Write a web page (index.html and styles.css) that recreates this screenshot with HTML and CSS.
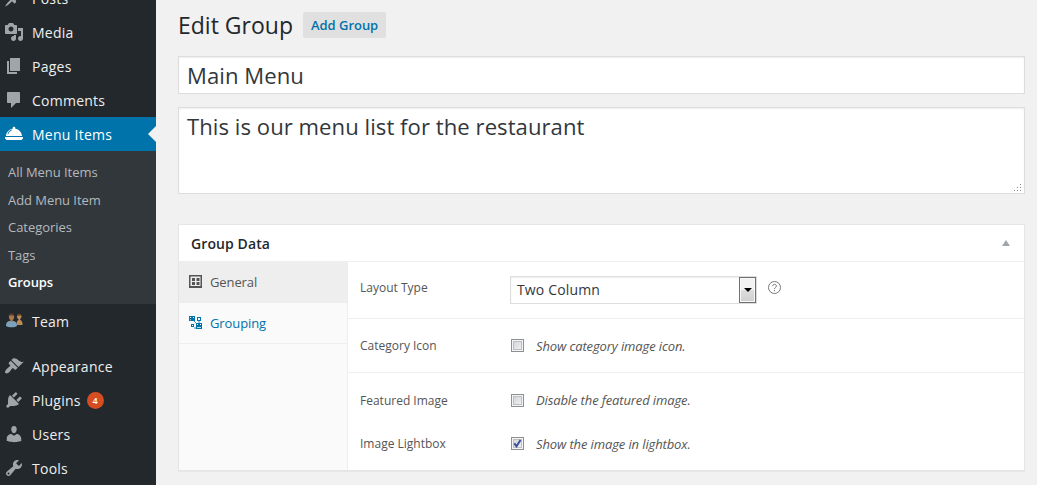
FILE: index.html
```html
<!DOCTYPE html>
<html lang="en">
<head>
<meta charset="utf-8">
<title>Edit Group</title>
<link rel="stylesheet" href="styles.css">
</head>
<body>
<div class="app">
  <nav class="sidebar">
    <a class="item"><svg class="ico" viewBox="0 0 20 20"><path d="M10.44 3.02l1.82-1.82 6.36 6.35-1.83 1.82c-1.05-.68-2.48-.57-3.41.36l-.75.75c-.92.93-1.04 2.35-.35 3.41l-1.83 1.82-2.41-2.41-2.8 2.79c-.42.42-3.38 2.71-3.8 2.29s1.86-3.39 2.28-3.81l2.79-2.79L4.1 9.36l1.83-1.82c1.05.69 2.48.57 3.4-.36l.75-.75c.93-.92 1.05-2.35.36-3.41z"/></svg><span>Posts</span></a>
    <a class="item"><svg class="ico" viewBox="0 0 20 20"><path d="M13 11V4c0-.55-.45-1-1-1h-1.67L9 1H5L3.67 3H2c-.55 0-1 .45-1 1v7c0 .55.45 1 1 1h10c.55 0 1-.45 1-1zM7 4.5c1.38 0 2.5 1.12 2.5 2.5S8.38 9.5 7 9.5 4.5 8.38 4.5 7 5.62 4.5 7 4.5zM14 6h5v10.5c0 1.38-1.12 2.5-2.5 2.5S14 17.88 14 16.5s1.12-2.5 2.5-2.5c.17 0 .34.02.5.05V9h-3V6zm-4 8.05V13h2v3.5c0 1.38-1.12 2.5-2.5 2.5S7 17.88 7 16.5 8.12 14 9.5 14c.17 0 .34.02.5.05z"/></svg><span>Media</span></a>
    <a class="item"><svg class="ico" viewBox="0 0 20 20"><path d="M6 15V2h10v13H6zm-1 1h8v2H3V5h2v11z"/></svg><span>Pages</span></a>
    <a class="item"><svg class="ico" viewBox="0 0 20 20"><path d="M4 2h11c.6 0 1 .4 1 1v9c0 .6-.4 1-1 1h-3l-5 5v-5H4c-.6 0-1-.4-1-1V3c0-.6.4-1 1-1z"/></svg><span>Comments</span></a>
    <a class="item current"><svg class="ico" viewBox="0 0 20 20"><path fill-rule="evenodd" d="M8.700 4c0-1.600 2.600-1.600 2.600 0v.8c3.700.6 6.400 3.400 6.700 7.200H2c.3-3.800 3-6.600 6.700-7.200zM4.300 10.300c.5-1.900 1.800-3.300 3.600-4l-.3-.7c-2.100.8-3.600 2.500-4.100 4.700zM1 13h18v1.500L17.500 16h-15L1 14.500z"/></svg><span>Menu Items</span></a>
    <div class="submenu">
      <a>All Menu Items</a>
      <a>Add Menu Item</a>
      <a>Categories</a>
      <a>Tags</a>
      <a class="active">Groups</a>
    </div>
    <a class="item"><svg class="ico" viewBox="0 0 20 20"><path fill="#bd8d56" d="M12.500 14c0-3 .7-4.500 2-5v-1c-2.400-1-2-5 .7-5s3.100 4 .9 5v1c1.800.4 2.600 2.300 2.400 5z"/><path fill="#6e4a2a" d="M13 5.500c0-3.700 4.800-3.700 4.800 0l-1-.8h-2.600z"/><path fill="#7ca3bd" d="M2 15c0-3.600 1.600-5 4-5h2.500c3 0 4.500 1.600 4.500 5-2 1.700-9 1.700-11 0z"/><path fill="#a9774c" d="M5 4h5v3.500L8.700 9v1.800H6.300V9L5 7.500z"/><path fill="#5d3d27" d="M4.700 6c-.8-5 6.300-5 5.600 0l-.7-1.600H5.500z"/></svg><span>Team</span></a>
    <div class="separator"></div>
    <a class="item"><svg class="ico" viewBox="0 0 20 20"><path d="M14.480 11.060L7.410 3.990l1.500-1.500c.5-.56 2.300-.47 3.510.32 1.210.8 1.430 1.280 2.910 2.100 1.180.64 2.450 1.260 4.450.85zm-.71.71L6.700 4.700 4.930 6.470c-.39.39-.39 1.020 0 1.410l1.060 1.060c.39.39.39 1.030 0 1.420-.6.6-1.430 1.110-2.210 1.690-.35.26-.7.530-1.010.84C1.430 14.230.4 16.080 1.400 17.070c.99 1 2.840-.03 4.180-1.360.31-.31.58-.66.85-1.020.57-.78 1.080-1.610 1.690-2.210.39-.39 1.020-.39 1.410 0l1.060 1.060c.39.39 1.020.39 1.410 0z"/></svg><span>Appearance</span></a>
    <a class="item"><svg class="ico" viewBox="0 0 20 20"><path d="M13.110 4.360L9.870 7.600 8 5.730l3.240-3.240c.35-.34 1.050-.2 1.560.32.520.51.660 1.210.31 1.550zm-8 1.770l.91-1.120 9.010 9.010-1.190.84c-.71.71-2.630 1.160-3.820 1.160H6.140L4.900 17.260c-.59.59-1.540.59-2.120 0-.59-.58-.59-1.530 0-2.120l1.240-1.240v-3.880c0-1.130.4-3.190 1.090-3.890zm7.260 3.970l3.240-3.240c.34-.35 1.040-.21 1.550.31.520.51.660 1.210.31 1.550l-3.240 3.250z"/></svg><span>Plugins</span><span class="count">4</span></a>
    <a class="item"><svg class="ico" viewBox="0 0 20 20"><path d="M10 9.250c-2.270 0-2.730-3.440-2.730-3.440C7 4.020 7.820 2 9.970 2c2.160 0 2.980 2.020 2.710 3.810 0 0-.41 3.440-2.680 3.440zm0 2.570L12.720 10c2.390 0 4.520 2.330 4.520 4.530v2.490s-3.650 1.130-7.240 1.130c-3.650 0-7.240-1.130-7.240-1.130v-2.490c0-2.250 1.940-4.480 4.470-4.480z"/></svg><span>Users</span></a>
    <a class="item"><svg class="ico" viewBox="0 0 20 20"><path fill-rule="evenodd" d="M16.680 9.770c-1.340 1.340-3.300 1.670-4.950.99l-5.410 6.520c-.99.99-2.590.99-3.580 0s-.99-2.590 0-3.570l6.520-5.420c-.68-1.650-.35-3.610.99-4.950 1.280-1.280 3.120-1.620 4.720-1.060l-2.890 2.890 2.820 2.820 2.860-2.870c.53 1.580.18 3.390-1.080 4.650zM3.810 16.210c.4.39 1.040.39 1.430 0 .4-.4.4-1.040 0-1.430-.39-.4-1.030-.4-1.430 0-.39.39-.39 1.030 0 1.430z"/></svg><span>Tools</span></a>
  </nav>

  <main class="content">
    <header class="heading">
      <h1>Edit Group</h1>
      <a class="add">Add Group</a>
    </header>
    <div class="field title">Main Menu</div>
    <div class="field desc"><span>This is our menu list for the restaurant</span>
      <svg class="grip" viewBox="0 0 8 8"><path d="M6 0h1v1H6zM3 3h1v1H3zM6 3h1v1H6zM0 6h1v1H0zM3 6h1v1H3zM6 6h1v1H6z"/></svg>
    </div>

    <section class="panel">
      <div class="panel-head"><h2>Group Data</h2><span class="toggle"></span></div>
      <div class="panel-body">
        <div class="tabs">
          <a class="tab selected"><svg class="tab-ico" viewBox="0 0 13 13"><path fill-rule="evenodd" d="M0 0h13v13H0zM1.500 1.500v9.500h10V1.500zM3 3h3v3H3zM7.500 3h3v3h-3zM3 7h3v3H3zM7.500 7h3v3h-3z"/></svg>General</a>
          <a class="tab"><svg class="tab-ico" viewBox="0 0 13 13"><path fill-rule="evenodd" d="M0 0h6v5H0zM1 1v1h1V1zM4 1v1h1V1zM1 3.500v.7h1v-.7zM7 7h6v6H7zM8 8v1h1V8zM11 8v1h1V8zM8 11.300v.7h4v-.7zM8 1h4v4H8zM9 2v2h2V2zM2 8h3v3H2zM3 9v1h1V9z"/><path d="M5 5l3 3M10 5v2M5 12h2" fill="none" stroke="currentColor" stroke-width=".8"/></svg>Grouping</a>
        </div>
        <div class="form">
          <div class="row layout"><label>Layout Type</label>
            <div class="select"><span>Two Column</span><i class="drop"></i></div>
            <svg class="help" viewBox="0 0 13 13"><circle cx="6.500" cy="6.500" r="6"/><path d="M4.700 5.100c0-2.400 3.700-2.300 3.700-.1 0 1.400-1.900 1.400-1.900 3M6.500 9v1.200"/></svg>
          </div>
          <div class="row category"><label>Category Icon</label><i class="check"></i><em>Show category image icon.</em></div>
          <div class="row featured"><label>Featured Image</label><i class="check"></i><em>Disable the featured image.</em></div>
          <div class="row lightbox"><label>Image Lightbox</label><i class="check"><svg viewBox="0 0 9 9"><path d="M1.300 4.300l2.200 3L7.500 1"/></svg></i><em>Show the image in lightbox.</em></div>
        </div>
      </div>
    </section>
  </main>
</div>
</body>
</html>
```
FILE: styles.css
```css
* { box-sizing: border-box; }
body {
  margin: 0;
  overflow: hidden;
  background: #f1f1f1;
  font: 13px "Open Sans", sans-serif;
  color: #444;
}
.app { display: flex; height: 485px; overflow: hidden; }

.sidebar { width: 156px; height: 505px; margin-top: -19px; flex: none; background: #23282d; }
.item {
  display: flex;
  align-items: center;
  height: 34px;
  padding-left: 4px;
  font-size: 14px;
  letter-spacing: .25px;
  color: #eee;
}
.ico { width: 20px; height: 20px; margin-right: 8px; fill: #a0a5aa; flex: none; }
.current { background: #0073aa; color: #fff; }
.current .ico { fill: #fff; }
.current::after {
  content: "";
  margin-left: auto;
  border: 8px solid transparent;
  border-left: 0;
  border-right-color: #f1f1f1;
}
.submenu { height: 153px; padding: 8px 0 0 8px; background: #32373c; }
.submenu a { display: block; height: 27.500px; line-height: 27.500px; letter-spacing: -.05px; color: #b4b9be; }
.submenu .active { color: #fff; font-weight: 600; letter-spacing: -.1px; }
.separator { height: 11px; }
.count {
  width: 17px;
  height: 17px;
  margin-left: 6px;
  border-radius: 50%;
  background: #d54e21;
  color: #fff;
  font-size: 9px;
  font-weight: 600;
  letter-spacing: 0;
  line-height: 17px;
  text-align: center;
}

.content { flex: 1; padding: 9px 12px 0 22px; }
.heading { display: flex; align-items: center; height: 32px; gap: 10px; }
h1 { margin: 0; font-size: 23px; font-weight: 400; line-height: 32px; color: #23282d; }
.add {
  height: 26px;
  padding: 0 8px;
  border-radius: 2px;
  background: #e0e0e0;
  color: #0073aa;
  font-weight: 600;
  letter-spacing: -.03px;
  line-height: 26px;
}
.field {
  border: 1px solid #ddd;
  background: #fff;
  box-shadow: inset 0 1px 2px rgba(0, 0, 0, .07);
  color: #32373c;
  font-size: 22.100px;
  letter-spacing: .05px;
  padding-left: 8px;
}
.title { height: 38px; margin-top: 15px; line-height: 36px; }
.desc { position: relative; height: 87px; margin-top: 13px; line-height: 36px; }
.grip { position: absolute; right: 2px; bottom: 1px; width: 8px; height: 8px; fill: #888; }

.panel {
  height: 247px;
  margin-top: 30px;
  border: 1px solid #e5e5e5;
  background: #fff;
  box-shadow: 0 1px 1px rgba(0, 0, 0, .04);
}
.panel-head {
  display: flex;
  align-items: center;
  justify-content: space-between;
  height: 37px;
  padding: 0 14px 0 12px;
  border-bottom: 1px solid #eee;
}
h2 { margin: 0; font-size: 14px; font-weight: 600; letter-spacing: .1px; color: #23282d; }
.toggle { border: 4px solid transparent; border-top: 0; border-bottom: 6px solid #a0a5aa; }
.panel-body { display: flex; height: 208px; }
.tabs { width: 169px; border-right: 1px solid #eee; background: #fafafa; }
.tab {
  display: flex;
  align-items: center;
  height: 41px;
  padding-left: 10px;
  border-bottom: 1px solid #eee;
  letter-spacing: -.1px;
  color: #0073aa;
}
.tab-ico { width: 13px; height: 13px; margin: 0 8px 2px 0; fill: currentColor; }
.selected { background: #eee; color: #555; }
.form { flex: 1; }
.row { display: flex; align-items: center; padding-left: 12px; font-size: 12px; color: #555; }
.row label { width: 150px; }
.row em { margin-left: 12px; font-size: 13px; letter-spacing: -.12px; }
.layout { height: 57px; border-bottom: 1px solid #eee; padding-bottom: 4px; }
.layout label { margin-bottom: 2px; }
.category { height: 54px; border-bottom: 1px solid #eee; }
.featured { height: 55px; }
.featured em { margin-bottom: 2px; }
.lightbox { height: 31px; }
.select {
  display: flex;
  align-items: center;
  justify-content: space-between;
  width: 247px;
  height: 28px;
  margin-top: 4px;
  padding-left: 6px;
  border: 1px solid #ddd;
  box-shadow: inset 0 1px 2px rgba(0, 0, 0, .07);
  color: #32373c;
  font-size: 14px;
  letter-spacing: .15px;
}
.select span { margin-bottom: 2px; }
.drop {
  display: flex;
  align-items: center;
  justify-content: center;
  width: 17px;
  height: 26px;
  border: 1px solid #707070;
  background: linear-gradient(#f2f2f2 0 50%, #ddd 50%, #cfcfcf);
  box-shadow: inset 0 0 0 1px #f8f8f8;
}
.drop::after { content: ""; border: 4px solid transparent; border-top-color: #000; border-bottom: 0; }
.help { width: 13px; height: 13px; margin: 0 0 2px 11px; fill: none; stroke: #777; stroke-width: 1; }
.check {
  width: 13px;
  height: 13px;
  margin-left: 1px;
  border: 1px solid #8e8f8f;
  background: linear-gradient(135deg, #cbcfd5, #f6f6f6) padding-box;
  box-shadow: inset 0 0 0 1px #f4f4f4, inset 0 0 0 2px #bcc0c6;
}
.check svg { display: block; width: 9px; height: 9px; margin: 1px; fill: none; stroke: #3c519b; stroke-width: 2; }
```
